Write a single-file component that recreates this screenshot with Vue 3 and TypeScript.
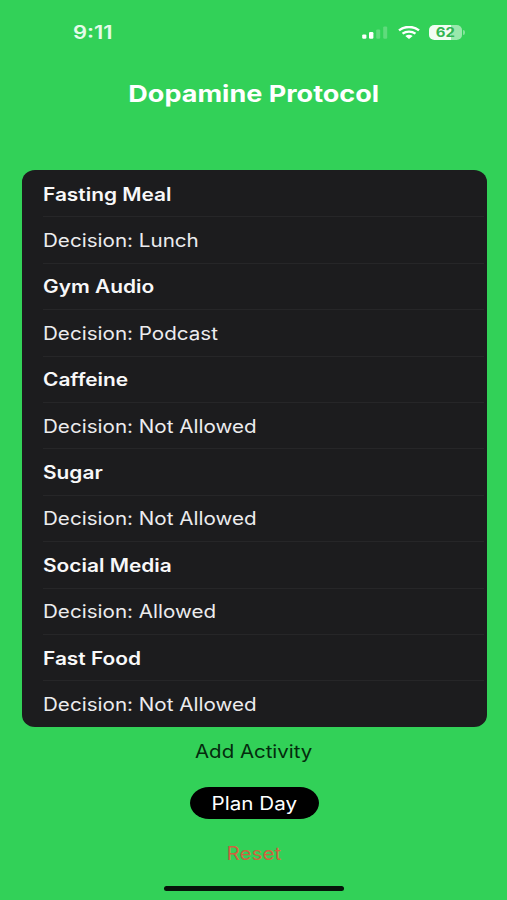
<script setup lang="ts">
interface Activity {
  name: string
  decision: string
}

const activities: Activity[] = [
  { name: 'Fasting Meal', decision: 'Lunch' },
  { name: 'Gym Audio', decision: 'Podcast' },
  { name: 'Caffeine', decision: 'Not Allowed' },
  { name: 'Sugar', decision: 'Not Allowed' },
  { name: 'Social Media', decision: 'Allowed' },
  { name: 'Fast Food', decision: 'Not Allowed' },
]
</script>

<template>
  <main class="screen">
    <header class="status">
      <span class="time wide">9:11</span>
      <div class="indicators">
        <svg class="signal" width="26" height="13" viewBox="0 0 26 13" fill="#fff">
          <rect x="0.2" y="8.4" width="4.2" height="4.4" rx="1.2" />
          <rect x="7" y="6" width="4.4" height="6.8" rx="1.2" />
          <rect x="14.2" y="3.4" width="4" height="9.4" rx="1.2" opacity=".22" />
          <rect x="21.2" y="0.4" width="4" height="12.4" rx="1.2" opacity=".22" />
        </svg>
        <svg class="wifi" width="22" height="13" viewBox="0 0 22 13" fill="none" stroke="#fff">
          <path d="M1 4.4C6.6-.2 15.4-.2 21 4.4" stroke-width="2.4" />
          <path d="M4.5 7.7c3.8-2.9 9.2-2.9 13 0" stroke-width="2.3" />
          <path d="M7.3 10.1Q11 7.6 14.7 10.1L11 13Z" fill="#fff" stroke="none" />
        </svg>
        <div class="battery">
          <div class="cell"><span class="level">62</span></div>
          <i class="cap"></i>
        </div>
      </div>
    </header>

    <h1 class="title"><span class="wide">Dopamine Protocol</span></h1>

    <section class="card">
      <template v-for="item in activities" :key="item.name">
        <div class="row"><span class="wide name">{{ item.name }}</span></div>
        <div class="row"><span class="wide decision">Decision: {{ item.decision }}</span></div>
      </template>
    </section>

    <footer class="actions">
      <button class="btn add"><span class="wide">Add Activity</span></button>
      <button class="btn plan"><span class="wide">Plan Day</span></button>
      <button class="btn reset"><span class="wide">Reset</span></button>
      <div class="home"></div>
    </footer>
  </main>
</template>

<style>
body {
  background: #32d158;
}
</style>

<style scoped>
.screen {
  box-sizing: border-box;
  width: 507px;
  height: 900px;
  overflow: hidden;
  display: flex;
  flex-direction: column;
  background: #32d158;
  color: #fff;
  font-family: Inter, 'Liberation Sans', sans-serif;
  font-size: 18px;
}
.wide {
  display: inline-block;
  white-space: nowrap;
  transform: scaleX(1.145);
}
.status {
  height: 64px;
  box-sizing: border-box;
  padding: 0 42px 0 73px;
  display: flex;
  align-items: center;
  justify-content: space-between;
  color: #e4fbe9;
}
.time {
  transform: scaleX(1.22);
  transform-origin: left center;
  font-weight: 600;
}
.indicators {
  display: flex;
  align-items: center;
}
.signal {
  margin-right: 1px;
}
.wifi {
  margin-left: 9px;
}
.battery {
  margin-left: 9px;
  display: flex;
  align-items: center;
}
.cell {
  width: 33px;
  height: 15px;
  border-radius: 5.5px / 5px;
  background: linear-gradient(90deg, #f0fdf3 0 66%, #99e8ac 66%);
  color: #32b552;
  display: flex;
  align-items: center;
  justify-content: center;
}
.level {
  font-size: 13px;
  font-weight: 700;
  line-height: 15px;
  transform: scaleX(1.15);
}
.cap {
  width: 2px;
  height: 5px;
  margin-left: 1px;
  border-radius: 0 2px 2px 0;
  background: #84e39b;
}
.title {
  margin: 0;
  height: 106px;
  box-sizing: border-box;
  padding-top: 15px;
  text-align: center;
  font-size: 23px;
  line-height: 30px;
  font-weight: 700;
}
.title .wide {
  transform: scaleX(1.175);
}
.card {
  box-sizing: border-box;
  height: 557px;
  margin: 0 20.5px 0 21.5px;
  padding-top: 1px;
  border-radius: 13px / 12px;
  overflow: hidden;
  background: #1c1c1e;
  display: grid;
  grid-template-rows: repeat(12, 46.4px);
}
.row {
  box-sizing: border-box;
  margin: 0 3px 0 21px;
  padding-top: 1px;
  display: flex;
  align-items: center;
  border-bottom: 1px solid #262628;
}
.row:last-child {
  border-bottom-color: transparent;
}
.row .wide {
  transform-origin: left center;
}
.row .name {
  font-weight: 600;
  color: #f8f8f9;
  transform: scaleX(1.16);
}
.decision {
  color: #ececee;
}
.actions {
  display: flex;
  flex-direction: column;
  align-items: center;
}
.btn {
  border: 0;
  padding: 0;
  background: none;
  font: inherit;
  line-height: 24px;
}
.add {
  margin-top: 13px;
  color: #042b0d;
}
.add .wide {
  transform: scaleX(1.135);
}
.plan {
  width: 129px;
  height: 32px;
  margin-top: 23px;
  margin-left: 1px;
  padding-top: 1px;
  border-radius: 19px / 16px;
  background: #000;
  color: #fff;
}
.reset {
  margin-top: 23px;
  color: #cf623f;
}
.home {
  width: 180px;
  height: 5px;
  margin-top: 20px;
  margin-left: 1px;
  border-radius: 3px;
  background: #06150a;
}
</style>
